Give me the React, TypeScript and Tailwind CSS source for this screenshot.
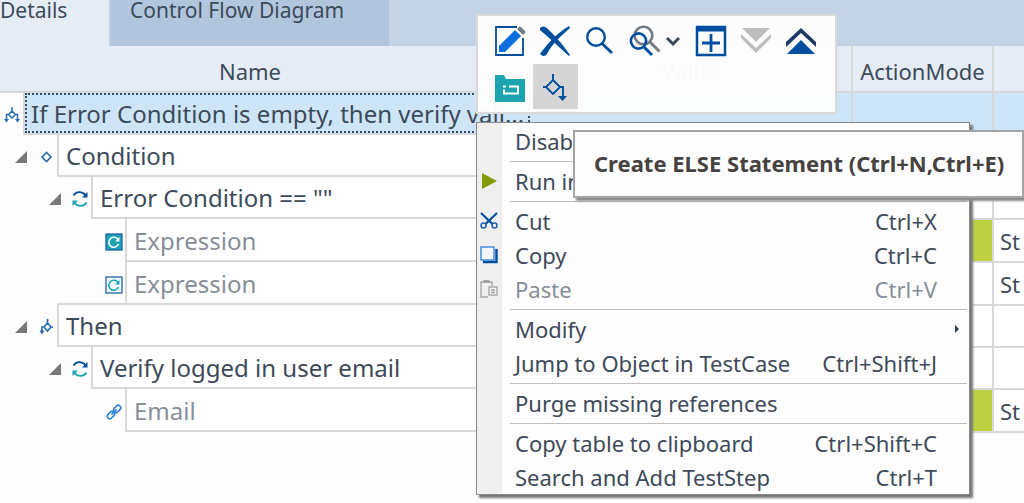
import React from 'react';

const BLUE = '#004f9f';
const TEAL = '#1ba3b0';

/* Iconos del árbol */

const BranchIcon = () => (
  <svg className="h-[18px] w-[18px]" viewBox="0 0 18 18" fill="none" stroke="#2b6cb0" strokeWidth="1.5">
    <path d="M9 1v4M9 5l3.500 3.500L9 12 5.500 8.500zM5.500 8.500H3.500V14M12.500 8.500h2V14" />
    <path d="M1 13h5l-2.500 3.500zM12 13h5l-2.500 3.500z" fill="#2b6cb0" stroke="none" />
  </svg>
);

const DiamondIcon = () => (
  <svg className="h-[18px] w-[18px]" viewBox="0 0 18 18" fill="none" stroke="#2b6cb0" strokeWidth="1.7">
    <path d="M9.500 4.500L14 9l-4.500 4.500L5 9z" />
  </svg>
);

const ThenIcon = () => (
  <svg className="h-[18px] w-[18px]" viewBox="0 0 18 18" fill="none" stroke="#2b6cb0" strokeWidth="1.7">
    <path d="M10.500 1v4M10.500 5l3.500 4-3.500 4L7 9zM7 9H5v5M14 9h2" />
    <path d="M2.500 12.500h5L5 16.500z" fill="#2b6cb0" stroke="none" />
  </svg>
);

const LoopIcon = () => (
  <svg className="h-[18px] w-[18px]" viewBox="0 0 18 18" fill="none" strokeWidth="1.8">
    <path d="M2.500 5.500C5 1 11 1 14.500 5" stroke={BLUE} />
    <path d="M16.500 2v5.500H11z" fill={BLUE} />
    <path d="M15.500 12.500C13 17 7 17 3.500 13" stroke={TEAL} />
    <path d="M1.500 16v-5.500H7z" fill={TEAL} />
  </svg>
);

const ExpressionIcon = ({ filled }: { filled?: boolean }) => (
  <svg className="h-[18px] w-[18px]" viewBox="0 0 18 18" fill="none">
    <rect x="1" y="1" width="16" height="16" fill={filled ? TEAL : '#f5fbff'} stroke="#1d63ad" strokeWidth="1.3" />
    <path d="M13 6.500A5 5 0 1 0 13.500 11" stroke={filled ? '#fff' : TEAL} strokeWidth="1.6" />
    <path d="M14.500 4v4.500H10z" fill={filled ? '#fff' : TEAL} />
  </svg>
);

const LinkIcon = () => (
  <svg className="h-[18px] w-[18px]" viewBox="0 0 18 18" fill="none" stroke="#2f80d8" strokeWidth="1.6">
    <rect x="-3.500" y="-2.500" width="8" height="5" rx="2.500" transform="translate(5.500 12.500) rotate(-45)" />
    <rect x="-4.500" y="-2.500" width="8" height="5" rx="2.500" transform="translate(12.500 5.500) rotate(-45)" />
    <path d="M6.500 11.500l5-5" />
  </svg>
);

/* Iconos de la barra flotante */

const EditIcon = () => (
  <svg className="h-8 w-8" viewBox="0 0 32 32" fill="none">
    <path d="M23 2H2v28h27V13" stroke={BLUE} strokeWidth="1.8" />
    <path d="M5 27v-6L21 5l6 6-16 16z" fill="#0a6fdc" />
    <path d="M23 4l2-2q1-1 2 0l4 4q1 1 0 2l-2 2z" fill="#737b83" />
  </svg>
);

const DeleteIcon = () => (
  <svg className="h-8 w-8" viewBox="0 0 32 32" fill={BLUE}>
    <path d="M1 3q3-3 7 0c7 7 15 15 23 27l-1 1C21 23 13 15 1 5z" />
    <path d="M30 1l1 2C22 11 13 19 8 29q-3 4-7 0C8 19 18 8 30 1z" />
  </svg>
);

const SearchIcon = () => (
  <svg className="h-8 w-8" viewBox="0 0 32 32" fill="none" stroke={BLUE}>
    <circle cx="12" cy="12" r="8.800" strokeWidth="2.400" />
    <path d="M18 18.500l10 9.500" strokeWidth="3" />
  </svg>
);

const SearchAllIcon = () => (
  <svg className="h-8 w-8" viewBox="0 0 32 32" fill="none" strokeWidth="2.600">
    <g stroke="#737b83">
      <circle cx="14.500" cy="10.500" r="8.800" />
      <path d="M20.500 16.500l10 10" strokeWidth="3" />
    </g>
    <g stroke={BLUE}>
      <circle cx="9.500" cy="16" r="7.600" />
      <path d="M14.500 21.500l8.500 8.500" strokeWidth="3" />
    </g>
  </svg>
);

const AddIcon = () => (
  <svg className="h-8 w-8" viewBox="0 0 32 32" fill="none" stroke={BLUE}>
    <path d="M2 2h28v28H2z" strokeWidth="2.500" />
    <path d="M1 4h30" strokeWidth="5" />
    <path d="M16 9v18M7 18h18" strokeWidth="2.800" />
  </svg>
);

const MoveDownIcon = () => (
  <svg className="h-8 w-8" viewBox="0 0 32 32" fill="none">
    <path d="M2 3h28L16 17z" fill="#bdbdbd" />
    <path d="M1 9v4l15 15 15-15V9L16 23z" fill="#bdbdbd" />
  </svg>
);

const MoveUpIcon = () => (
  <svg className="h-8 w-8" viewBox="0 0 32 32" fill="none">
    <path d="M1 22v-5L16 3l15 14v5L16 8z" fill="#1f3864" />
    <path d="M2 29h28L16 15z" fill={BLUE} />
  </svg>
);

const FolderIcon = () => (
  <svg className="h-8 w-8" viewBox="0 0 32 32" fill="none">
    <path d="M1 4h9l2 4h19v23H1z" fill={TEAL} />
    <path d="M15 15.500h9v7H10v-4M9 15.500h3" stroke="#fff" strokeWidth="2" />
  </svg>
);

const ElseIcon = () => (
  <svg className="h-8 w-8" viewBox="0 0 32 32" fill="none" stroke={BLUE} strokeWidth="1.900">
    <path d="M13 3v6M13 9l7 7-7 7-7-7zM3 16h3M20 16h3v9" />
    <path d="M18 25h9l-4.500 5z" fill={BLUE} stroke="none" />
  </svg>
);

/* Iconos del menú contextual */

const RunIcon = () => (
  <svg className="h-[18px] w-[18px]" viewBox="0 0 18 18">
    <path d="M2 1l15 8-15 8z" fill="#839b05" />
  </svg>
);

const CutIcon = () => (
  <svg className="h-[18px] w-[18px]" viewBox="0 0 18 18" fill="none" stroke="#1d63ad" strokeWidth="1.500">
    <path d="M1 1l11.500 11M17 1L5.500 12" strokeWidth="2.200" stroke={BLUE} />
    <circle cx="3.500" cy="13.500" r="2.500" />
    <circle cx="14.500" cy="13.500" r="2.500" />
  </svg>
);

const CopyIcon = () => (
  <svg className="h-[18px] w-[18px]" viewBox="0 0 18 18" fill="none">
    <path d="M3 16h13.500V3" stroke={BLUE} strokeWidth="2.500" />
    <rect x="1" y="1" width="13" height="13" fill="#f3f6fa" stroke="#2f80d8" strokeWidth="1.300" />
  </svg>
);

const PasteIcon = () => (
  <svg className="h-[18px] w-[18px]" viewBox="0 0 18 18" fill="none" stroke="#a3a3a3" strokeWidth="1.300">
    <path d="M8 17H1V2h11v4" />
    <path d="M3.500 1.500h6" strokeWidth="3" />
    <rect x="9" y="7" width="8" height="8" fill="#f5f5f5" />
    <path d="M11 10h4M11 12.500h4" />
  </svg>
);

type TreeRow = {
  label: string;
  indent: string;
  icon: React.ReactNode;
  open?: boolean;
  muted?: boolean;
  selected?: boolean;
  topLine?: boolean;
  last?: string;
};

const rows: TreeRow[] = [
  { label: 'If Error Condition is empty, then verify vali...', indent: 'w-[23px]', icon: <BranchIcon />, selected: true },
  { label: 'Condition', indent: 'w-[57px]', icon: <DiamondIcon />, open: true },
  { label: 'Error Condition == ""', indent: 'w-[91px]', icon: <LoopIcon />, open: true },
  { label: 'Expression', indent: 'w-[125px]', icon: <ExpressionIcon filled />, muted: true, last: 'St' },
  { label: 'Expression', indent: 'w-[125px]', icon: <ExpressionIcon />, muted: true, last: 'St' },
  { label: 'Then', indent: 'w-[57px]', icon: <ThenIcon />, open: true, topLine: true },
  { label: 'Verify logged in user email', indent: 'w-[91px]', icon: <LoopIcon />, open: true },
  { label: 'Email', indent: 'w-[125px]', icon: <LinkIcon />, muted: true, last: 'St' },
];

const highlighted = [3, 7];

const tools = [
  { name: 'Edit', icon: <EditIcon /> },
  { name: 'Delete', icon: <DeleteIcon /> },
  { name: 'Search', icon: <SearchIcon /> },
  { name: 'Search all', icon: <SearchAllIcon />, more: true },
  { name: 'Add', icon: <AddIcon /> },
  { name: 'Move down', icon: <MoveDownIcon /> },
  { name: 'Move up', icon: <MoveUpIcon /> },
];

type MenuEntry = { label: string; keys?: string; icon?: React.ReactNode; disabled?: boolean; submenu?: boolean };

const menuGroups: MenuEntry[][] = [
  [{ label: 'Disable' }],
  [{ label: 'Run in', icon: <RunIcon /> }],
  [
    { label: 'Cut', keys: 'Ctrl+X', icon: <CutIcon /> },
    { label: 'Copy', keys: 'Ctrl+C', icon: <CopyIcon /> },
    { label: 'Paste', keys: 'Ctrl+V', icon: <PasteIcon />, disabled: true },
  ],
  [{ label: 'Modify', submenu: true }, { label: 'Jump to Object in TestCase', keys: 'Ctrl+Shift+J' }],
  [{ label: 'Purge missing references' }],
  [
    { label: 'Copy table to clipboard', keys: 'Ctrl+Shift+C' },
    { label: 'Search and Add TestStep', keys: 'Ctrl+T' },
  ],
];

const Tabs = () => (
  <div role="tablist" className="flex h-[46px] bg-[#c4d2e6] text-[21px] leading-5">
    <button role="tab" aria-selected="true" className="flex w-[109px] bg-[#e5ecf5]">
      Details
    </button>
    <button role="tab" aria-selected="false" className="flex w-[280px] border-l-2 border-[#bfd0e4] bg-[#b1c6dc] pl-[19px]">
      Control Flow Diagram
    </button>
  </div>
);

const TreeTable = () => (
  <table className="w-full table-fixed border-collapse">
    <colgroup>
      <col className="w-[530px]" />
      <col className="w-[322px]" />
      <col className="w-[141px]" />
      <col />
    </colgroup>
    <thead>
      <tr className="h-[46px] border-b-2 border-[#d6d8da] bg-[#e5ecf5]">
        <th className="p-0 pr-[30px] pt-1 font-normal">Name</th>
        <th className="border-r-2 border-[#d6d8da] p-0 pt-1 font-normal">Value</th>
        <th className="border-r-2 border-[#d6d8da] p-0 pt-1 font-normal">ActionMode</th>
        <th></th>
      </tr>
    </thead>
    <tbody>
      {rows.map((row, i) => (
        <tr key={i} className={row.selected ? 'bg-[#cde5f7]' : 'bg-white'}>
          <td className="p-0">
            <div className={`flex ${row.muted ? 'h-[43px]' : 'h-[42px]'}`}>
              <div className={`flex shrink-0 items-center justify-end gap-2.5 bg-[#fdfdfd] pr-0.5 pt-0.5 ${row.indent}`}>
                {row.open && (
                  <button aria-label={`Collapse ${row.label}`}>
                    <svg className="h-3 w-3" viewBox="0 0 12 12">
                      <path d="M12 0v12H0z" fill="#787878" />
                    </svg>
                  </button>
                )}
                {row.icon}
              </div>
              <div
                className={`flex min-w-0 flex-1 border-b-2 border-l-2 border-[#d6d8da] ${row.topLine ? '-mt-0.5 border-t-2' : ''}`}
              >
                <span
                  className={`flex flex-1 items-center whitespace-nowrap pt-0.5 text-2xl ${
                    row.selected ? 'border-2 border-dotted border-[#34506a] pl-1' : 'pl-[7px]'
                  } ${row.muted ? 'text-[#868e98]' : ''}`}
                >
                  {row.label}
                </span>
              </div>
            </div>
          </td>
          <td className="border-b-2 border-r-2 border-[#d6d8da]"></td>
          <td className={`border-b-2 border-r-2 border-[#d6d8da] ${highlighted.includes(i) ? 'bg-[#bdd143]' : ''}`}></td>
          <td className="border-b-2 border-[#d6d8da] p-0 pl-1.5">{row.last}</td>
        </tr>
      ))}
    </tbody>
  </table>
);

const FloatingToolbar = () => (
  <div className="absolute left-[476px] top-[14px] w-[361px] border-2 border-[#d9d9d9] bg-[#fdfdfd]/98 pb-[3px] pl-2.5 pt-[3px]">
    <div className="flex">
      {tools.map((tool) => (
        <button
          key={tool.name}
          aria-label={tool.name}
          className={`flex h-[45px] shrink-0 items-center pb-px pl-1.5 ${tool.more ? 'pr-2' : 'pr-[7px]'}`}
        >
          {tool.icon}
          {tool.more && (
            <svg className="ml-1 h-4 w-4" viewBox="0 0 16 16" fill="none" stroke="#3a4654" strokeWidth="3">
              <path d="M2 5l6 6 6-6" />
            </svg>
          )}
        </button>
      ))}
    </div>
    <div className="flex">
      <button aria-label="Create folder" className="flex h-[45px] items-center pl-1.5 pr-[7px]">
        <FolderIcon />
      </button>
      <button aria-label="Create ELSE Statement" className="flex h-[45px] items-center bg-[#d5d5d5] pl-[7px] pr-1.5">
        <ElseIcon />
      </button>
    </div>
  </div>
);

const ContextMenu = () => (
  <div
    role="menu"
    className="absolute left-[476px] top-[122px] w-[494px] border border-[#8a8a8a] bg-[#fdfdfd] shadow-[3px_3px_2px_#777777]"
  >
    <div className="h-px w-[25px] bg-[#efefef]"></div>
    {menuGroups.map((group, g) => (
      <div key={g}>
        {g > 0 && (
          <div className="flex h-1.5 items-center">
            <div className="h-full w-[25px] bg-[#efefef]"></div>
            <div className="ml-2 mr-0.5 h-px flex-1 bg-[#bfbfbf]"></div>
          </div>
        )}
        {group.map((entry) => (
          <button
            key={entry.label}
            role="menuitem"
            disabled={entry.disabled}
            className={`flex h-[34px] w-full items-center text-left ${entry.disabled ? 'text-[#868e98]' : ''}`}
          >
            <span className="flex h-full w-[25px] items-center justify-center bg-[#efefef] pr-0.5">{entry.icon}</span>
            <span className="flex-1 pl-[13px]">{entry.label}</span>
            {entry.keys && <span className="pr-8">{entry.keys}</span>}
            {entry.submenu && (
              <svg className="mr-2.5 h-2 w-1" viewBox="0 0 4 8">
                <path d="M0 0l4 4-4 4z" fill="#2f3b4a" />
              </svg>
            )}
          </button>
        ))}
      </div>
    ))}
  </div>
);

const Tooltip = () => (
  <div
    role="tooltip"
    className="absolute left-[573px] right-0 top-[130px] flex h-[68px] items-center whitespace-nowrap border-2 border-[#a5a5a5] bg-[#fdfdfd] pb-0.5 pl-[19px] font-bold text-[#45423f] shadow-[3px_3px_2px_#8a8a8a]"
  >
    Create ELSE Statement (Ctrl+N,Ctrl+E)
  </div>
);

const App: React.FC = () => {
  return (
    <div className="relative min-h-screen overflow-hidden bg-[#fdfdfd] font-['Noto_Sans','Open_Sans',sans-serif] text-[22px] leading-7 text-[#3d4a5a]">
      <Tabs />
      <TreeTable />
      <FloatingToolbar />
      <ContextMenu />
      <Tooltip />
    </div>
  );
};

export default App;
